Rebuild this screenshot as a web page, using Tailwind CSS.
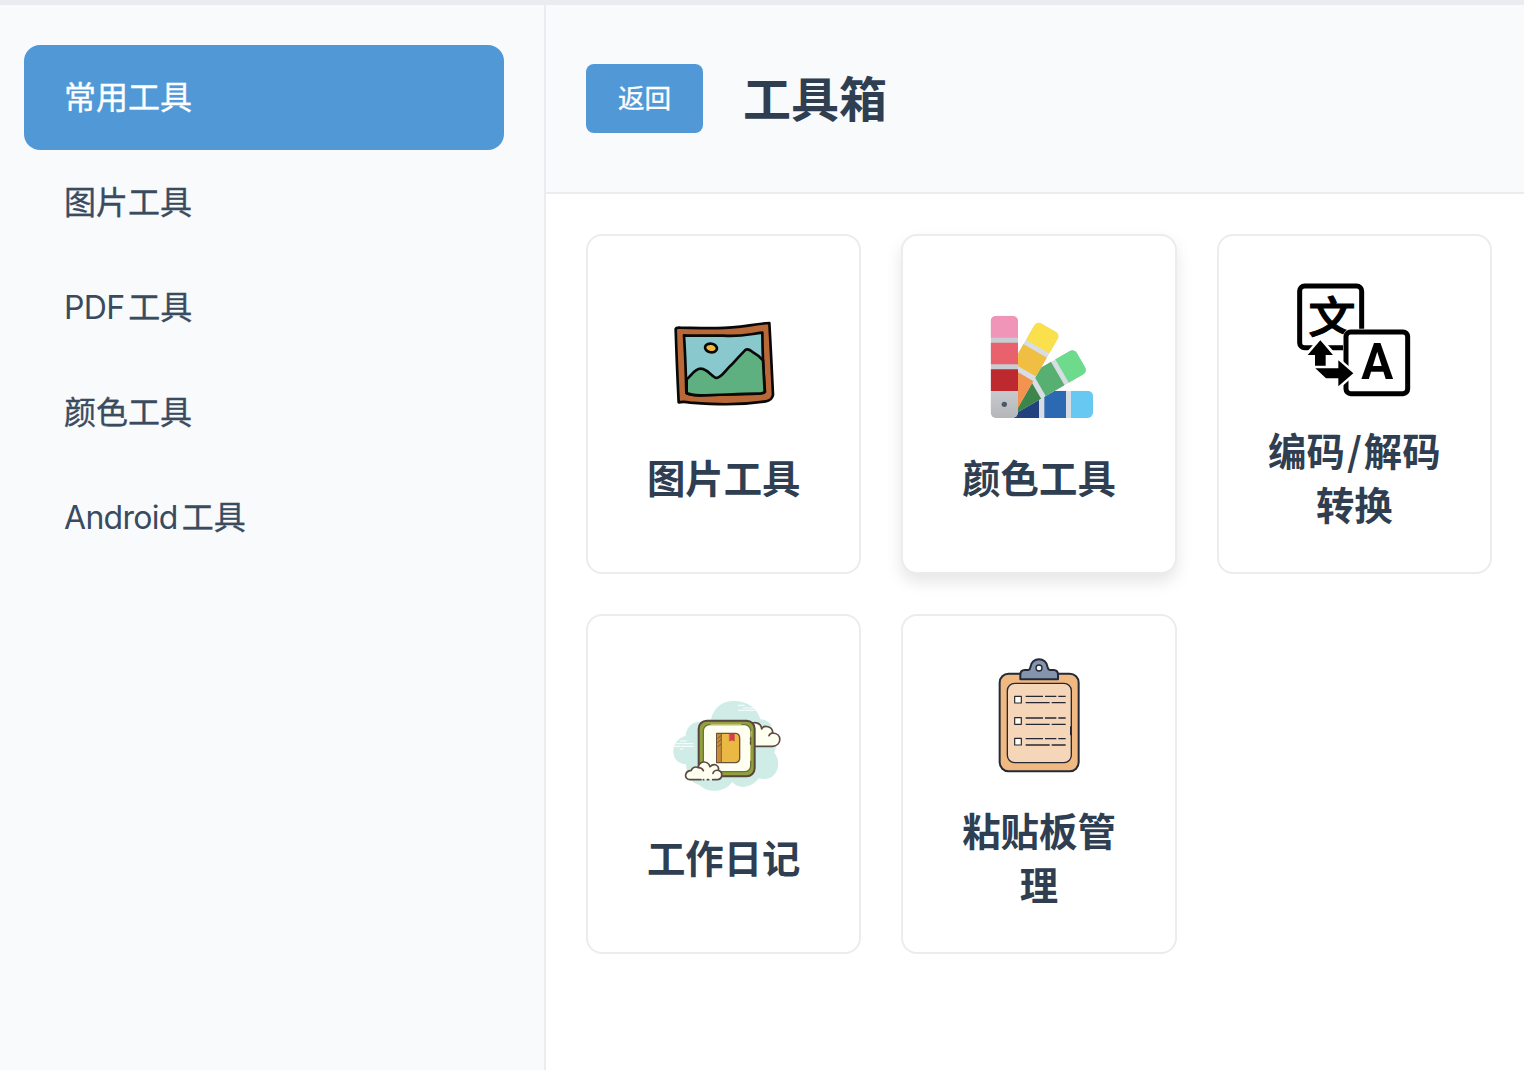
<!DOCTYPE html>
<html lang="zh-CN">
<head>
<meta charset="utf-8">
<title>工具箱</title>
<script src="https://cdn.jsdelivr.net/npm/@tailwindcss/browser@4"></script>
</head>
<body class="flex h-screen flex-col overflow-hidden bg-white font-['Noto_Sans_CJK_SC',sans-serif] text-[#2f3e50]">
<div class="h-[5px] shrink-0 bg-[#ebecf0]"></div>
<div class="flex min-h-0 flex-1">
  <aside class="w-[546px] shrink-0 border-r-2 border-[#ebecf0] bg-[#f8fafc] px-6 py-10">
    <nav class="flex w-[480px] flex-col text-[32px] leading-[48px] text-[#3a4b60] [-webkit-text-stroke:0.35px_currentColor]">
      <a class="flex h-[105px] items-center rounded-2xl bg-[#5198d7] px-10 pb-[5px] text-white">常用工具</a>
      <a class="flex h-[105px] items-center px-10 pb-[5px]">图片工具</a>
      <a class="flex h-[105px] items-baseline gap-[4px] px-10 pt-[26px]"><span class="font-['Inter'] text-[32px] font-normal tracking-[-0.7px] [-webkit-text-stroke:0px]">PDF</span><span>工具</span></a>
      <a class="flex h-[105px] items-center px-10 pb-[5px]">颜色工具</a>
      <a class="flex h-[105px] items-baseline gap-[4px] px-10 pt-[26px]"><span class="font-['Inter'] text-[32px] font-normal tracking-[-0.7px] [-webkit-text-stroke:0px]">Android</span><span>工具</span></a>
    </nav>
  </aside>
  <main class="flex min-w-0 flex-1 flex-col">
    <header class="flex h-[189px] items-center gap-10 border-b-2 border-[#ebecf0] bg-[#f8fafc] px-10">
      <button class="h-[69px] w-[117px] rounded-lg bg-[#5198d7] pb-[3px] text-[26.6px] leading-none text-white [-webkit-text-stroke:0.35px_currentColor]">返回</button>
      <h1 class="pb-[5px] text-[48px] leading-[72px] font-bold">工具箱</h1>
    </header>
    <section class="grid w-[986px] grid-cols-3 gap-10 p-10 text-center text-[38.4px] leading-[54px] font-bold">
      <article class="flex h-[340px] flex-col items-center justify-center gap-[18px] rounded-2xl border-2 border-[#ebecf0]">
        <svg class="size-32" viewBox="-1 -6 384 384" fill="none" stroke="#080808" stroke-width="8" stroke-linejoin="round" stroke-linecap="round">
          <path fill="#b96837" d="M46 72Q48 67 60 68Q100 70 160 69C230 71 270 58 327 54Q332 140 338 270Q334 287 316 289C230 302 160 298 90 293Q70 289 55 292Q49 170 46 72Z"/>
          <path fill="#89c9ce" d="M71 91C110 93 150 91 190 92C240 96 270 87 306 83Q307 180 314 260Q310 266 293 266C230 266 180 271 120 271Q90 270 78 264Q76 170 71 91Z"/>
          <path fill="#5fb081" d="M79 223C94 210 105 190 121 191C141 191 154 215 169 219C185 217 197 193 215 178Q237 153 254 136Q262 129 274 139Q295 151 308 166L313 260Q308 266 293 266C230 266 180 271 120 271Q90 270 79 264Z"/>
          <ellipse cx="152" cy="129" rx="18" ry="13" transform="rotate(10 152 129)" fill="#f3b83b"/>
        </svg>
        <h2 class="pb-[2px]">图片工具</h2>
      </article>
      <article class="flex h-[340px] flex-col items-center justify-center gap-[18px] rounded-2xl border-2 border-[#ebecf0] bg-white shadow-[0_8px_16px_rgba(0,0,0,0.1)]">
        <svg class="size-32" viewBox="0 -6 384 384">
          <defs>
            <linearGradient id="metal" x2="0" y2="1"><stop stop-color="#c9cacd"/><stop offset="1" stop-color="#b4b6b9"/></linearGradient>
            <clipPath id="blade"><rect x="47" y="32" width="82" height="307" rx="17"/></clipPath>
            <clipPath id="fan"><path d="M112 0H384V339H112Z"/></clipPath>
          </defs>
          <g clip-path="url(#fan)">
            <g transform="rotate(90 88 298)" clip-path="url(#blade)">
              <path fill="#d7dde2" d="M47 32h82v307H47z"/><path fill="#67c8f1" d="M47 32h82v66H47z"/><path fill="#2c69b3" d="M47 113h82v65H47z"/><path fill="#22427e" d="M47 194h82v145H47z"/>
            </g>
            <g transform="rotate(60 88 298)" clip-path="url(#blade)">
              <path fill="#d7dde2" d="M47 32h82v307H47z"/><path fill="#6eda8b" d="M47 32h82v66H47z"/><path fill="#57b071" d="M47 113h82v65H47z"/><path fill="#3c864b" d="M47 194h82v145H47z"/>
            </g>
            <g transform="rotate(30 88 298)" clip-path="url(#blade)">
              <path fill="#d7dde2" d="M47 32h82v307H47z"/><path fill="#fae04c" d="M47 32h82v66H47z"/><path fill="#f0be42" d="M47 113h82v65H47z"/><path fill="#f29450" d="M47 194h82v145H47z"/>
            </g>
          </g>
          <g clip-path="url(#blade)">
            <path fill="#c8cdd2" d="M47 32h82v307H47z"/><path fill="#f094b8" d="M47 32h82v66H47z"/><path fill="#e8616d" d="M47 113h82v65H47z"/><path fill="#bc292e" d="M47 193h82v65H47z"/><path fill="url(#metal)" d="M47 258h82v81H47z"/>
          </g>
          <circle cx="88" cy="298" r="8" fill="#4b5a67"/>
        </svg>
        <h2 class="pb-[2px]">颜色工具</h2>
      </article>
      <article class="flex h-[340px] flex-col items-center justify-center gap-[18px] rounded-2xl border-2 border-[#ebecf0]">
        <svg class="size-32" viewBox="16 3 384 384">
          <rect x="45" y="33" width="186" height="185" rx="15" fill="white" stroke="black" stroke-width="15"/>
          <text x="71" y="174" font-family="Noto Sans CJK SC" font-size="129" font-weight="500" stroke="black" stroke-width="3" textLength="142" lengthAdjust="spacingAndGlyphs">文</text>
          <rect x="175" y="161" width="204" height="206" rx="25" fill="white"/>
          <rect x="184" y="171" width="185" height="185" rx="14" fill="white" stroke="black" stroke-width="15"/>
          <path d="M107 194 148 240H123V273H161V255L207 295L161 335V309H123L91 277V240H67Z" fill="white" stroke="white" stroke-width="13"/>
          <path d="M107 196 145 240H123V272H91V240H69ZM92 280H161V256L206 295L161 334V310H124Z"/>
          <text x="278" y="311" text-anchor="middle" font-family="Roboto" font-size="149" font-weight="700" textLength="96" lengthAdjust="spacingAndGlyphs">A</text>
        </svg>
        <h2 class="pb-[2px]">编码<span class="mx-[2px]">/</span>解码<br>转换</h2>
      </article>
      <article class="flex h-[340px] flex-col items-center justify-center gap-[18px] rounded-2xl border-2 border-[#ebecf0]">
        <svg class="size-32" viewBox="-1 -21 384 384" stroke-linecap="round" stroke-linejoin="round">
          <path fill="#d0ece6" d="M77 223C50 221 38 203 39 181C41 158 56 143 76 138C77 109 99 94 119 95C137 95 145 96 152 88C161 49 190 33 220 33C260 33 291 53 300 88C325 90 336 103 337 126Q357 143 342 188C360 210 357 244 334 261Q319 271 295 265C277 292 236 301 216 276C195 307 143 312 117 285C89 278 79 257 77 223Z"/>
          <g stroke="white" stroke-width="3" stroke-dasharray="18 3 30 3"><path d="M234 46H255M249 54H290M234 61H283M60 153H78M47 161H97M41 169H99M60 177H68"/></g>
          <path d="M265 169H337C365 166 366 130 337 129C338 109 310 103 304 117C302 96 277 93 267 106Z" fill="#fffff0" stroke="#5b4a44" stroke-width="5"/>
          <rect x="115" y="92" width="168" height="167" rx="24" fill="#91a23c" stroke="#574640" stroke-width="6"/>
          <rect x="129" y="104" width="142" height="141" rx="18" fill="#fffff1" stroke="#6d7337" stroke-width="4"/>
          <path d="M152 103H242M272 124V139M271 166V211" fill="none" stroke="#d0d47d" stroke-width="3"/>
          <path d="M270 145V148M270 155V162" stroke="#574640" stroke-width="3"/>
          <path d="M169 130H226Q238 131 238 144V205Q238 217 226 218H169Z" fill="#e9b944" stroke="#6c5040" stroke-width="4"/>
          <path d="M172 132H183V216H172Z" fill="#c88c35"/><path d="M183 131V217M172 145L182 137M172 157L182 149M172 170L182 162" stroke="#735139" stroke-width="2.5"/>
          <path d="M208 131H222V153L215 150L208 153Z" fill="#d73d4b" stroke="#b23d43" stroke-width="1.5"/>
          <path d="M88 269C70 267 72 243 93 241C96 231 107 229 114 233C116 212 142 210 149 230C162 217 178 227 174 241C188 244 188 267 172 269Z" fill="#fffff0"/>
          <path d="M122 269H88C70 267 72 243 93 241C96 231 107 229 114 233C116 212 142 210 149 230C162 217 178 227 174 241C188 244 188 267 172 269H157M145 269H141M130 269H129M114 233C122 233 127 237 129 242M174 241C166 240 159 244 158 250M337 129Q328 130 326 137" fill="none" stroke="#5b4a44" stroke-width="5"/>
        </svg>
        <h2 class="pb-[2px]">工作日记</h2>
      </article>
      <article class="flex h-[340px] flex-col items-center justify-center gap-[18px] rounded-2xl border-2 border-[#ebecf0]">
        <svg class="size-32" viewBox="-30 18 384 384" fill="none" stroke="#252936" stroke-linejoin="round">
          <rect x="44" y="71" width="237" height="293" rx="27" fill="#f0b982" stroke-width="6"/>
          <rect x="67" y="100" width="192" height="238" rx="22" fill="#f5d6b9" stroke-width="4"/>
          <path d="M106 88V74Q106 61 119 60H130Q135 59 136 52C139 20 185 20 188 52Q189 59 195 60H206Q219 61 219 74V88Z" fill="#8594ad" stroke-width="6"/>
          <circle cx="162" cy="54" r="9" fill="#f8faf4" stroke-width="4"/>
          <g fill="#fffef1" stroke-width="3.5"><path d="M89 139H109V159H89ZM89 203H109V223H89ZM89 265H109V285H89Z"/></g>
          <path d="M122 139H174M180 139H214M220 139H242M122 158H194M200 158H242M122 204H174M180 204H214M220 204H242M122 223H194M200 223H242M122 266H174M180 266H214M220 266H242M122 285H194M200 285H242" stroke-width="4"/>
          <path d="M258 229V256" stroke-width="6"/>
        </svg>
        <h2 class="pb-[2px]">粘贴板管<br>理</h2>
      </article>
    </section>
  </main>
</div>
</body>
</html>
